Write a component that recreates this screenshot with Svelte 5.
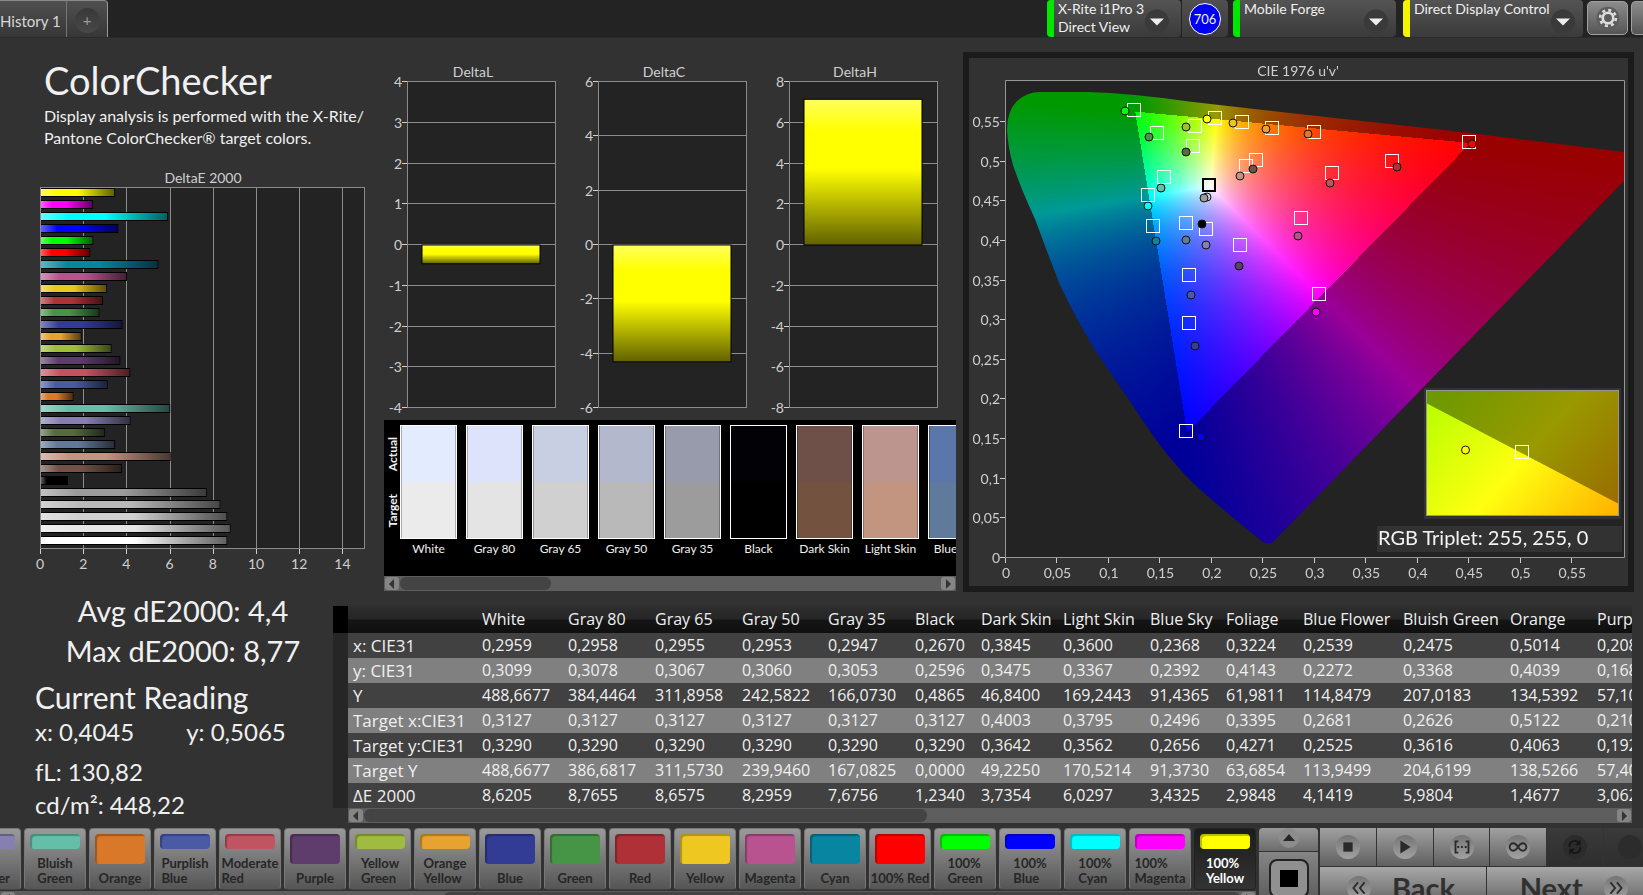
<script>
    import { onMount } from "svelte";

    const bars = [
        ["#ffff00", 3.43], ["#ff00ff", 2.4], ["#00ffff", 5.88], ["#0000ff", 3.58], ["#00ff00", 2.42],
        ["#ff0000", 2.28], ["#0885a1", 5.43], ["#b85390", 3.98], ["#ecc720", 3.06], ["#af3237", 2.87],
        ["#469446", 2.7], ["#333c95", 3.77], ["#e8a22f", 1.87], ["#9fbb40", 3.26], ["#5e3c6c", 3.67],
        ["#c25360", 4.13], ["#4a5ba6", 3.08], ["#d87a2a", 1.5], ["#64bea8", 5.98], ["#8580b1", 4.14],
        ["#576b40", 2.95], ["#627a9a", 3.43], ["#c39581", 6.0], ["#735244", 3.74], ["#000000", 1.25],
        ["#9b9b9b", 7.67], ["#b9b9b9", 8.3], ["#d0d0d0", 8.62], ["#e6e6e6", 8.77], ["#ffffff", 8.62],
    ];

    const deltas = [
        { title: "DeltaL", x: 408, max: 4, step: 1, value: -0.46 },
        { title: "DeltaC", x: 599, max: 6, step: 2, value: -4.3 },
        { title: "DeltaH", x: 790, max: 8, step: 2, value: 7.15 },
    ];

    const swatches = [
        ["White", "#e3ebff", "#ebebeb"],
        ["Gray 80", "#dde3fa", "#e4e4e4"],
        ["Gray 65", "#c9cfe3", "#d0d0d0"],
        ["Gray 50", "#b3b8cd", "#b9b9b9"],
        ["Gray 35", "#989bac", "#9c9c9c"],
        ["Black", "#020206", "#000000"],
        ["Dark Skin", "#6e5049", "#735240"],
        ["Light Skin", "#bc958f", "#c29580"],
        ["Blue Sky", "#5b76aa", "#5f7a9b"],
    ];

    const targets = [
        [1134, 110], [1157, 133], [1193, 146], [1195, 126], [1215, 118], [1242, 122], [1272, 128],
        [1256, 160], [1246, 166], [1164, 177], [1148, 195], [1153, 226], [1186, 223], [1206, 229],
        [1240, 245], [1189, 275], [1189, 323], [1314, 132], [1469, 142], [1392, 161], [1332, 173],
        [1301, 218], [1319, 294], [1186, 431],
    ];

    const readings = [
        [1125, 111, "#00ff00"], [1149, 137, "#469446"], [1186, 127, "#9fbb40"], [1207, 119, "#ffff00"],
        [1233, 123, "#ecc720"], [1266, 129, "#e8a22f"], [1186, 152, "#576b40"], [1240, 176, "#c39581"],
        [1253, 169, "#735244"], [1161, 188, "#64bea8"], [1148, 206, "#00ffff"], [1207, 197, "#d0d0d0"],
        [1204, 198, "#9b9b9b"], [1202, 224, "#000000"], [1156, 241, "#0885a1"], [1186, 240, "#627a9a"],
        [1206, 245, "#8580b1"], [1239, 266, "#5e3c6c"], [1191, 295, "#4a5ba6"], [1195, 346, "#383d96"],
        [1298, 236, "#b85390"], [1308, 134, "#d87a2a"], [1472, 144, "#ff0000"], [1397, 167, "#af3237"],
        [1330, 183, "#c25360"], [1316, 312, "#ff00ff"], [1201, 437, "#0000ff"],
    ];

    const columns = [
        ["", 129], ["White", 86], ["Gray 80", 87], ["Gray 65", 87], ["Gray 50", 86], ["Gray 35", 87],
        ["Black", 66], ["Dark Skin", 82], ["Light Skin", 87], ["Blue Sky", 76], ["Foliage", 77],
        ["Blue Flower", 100], ["Bluish Green", 107], ["Orange", 87], ["Purplish Blue", 110],
    ];

    const rows = [
        ["x: CIE31", "0,2959", "0,2958", "0,2955", "0,2953", "0,2947", "0,2670", "0,3845", "0,3600", "0,2368", "0,3224", "0,2539", "0,2475", "0,5014", "0,2080"],
        ["y: CIE31", "0,3099", "0,3078", "0,3067", "0,3060", "0,3053", "0,2596", "0,3475", "0,3367", "0,2392", "0,4143", "0,2272", "0,3368", "0,4039", "0,1680"],
        ["Y", "488,6677", "384,4464", "311,8958", "242,5822", "166,0730", "0,4865", "46,8400", "169,2443", "91,4365", "61,9811", "114,8479", "207,0183", "134,5392", "57,1000"],
        ["Target x:CIE31", "0,3127", "0,3127", "0,3127", "0,3127", "0,3127", "0,3127", "0,4003", "0,3795", "0,2496", "0,3395", "0,2681", "0,2626", "0,5122", "0,2100"],
        ["Target y:CIE31", "0,3290", "0,3290", "0,3290", "0,3290", "0,3290", "0,3290", "0,3642", "0,3562", "0,2656", "0,4271", "0,2525", "0,3616", "0,4063", "0,1920"],
        ["Target Y", "488,6677", "386,6817", "311,5730", "239,9460", "167,0825", "0,0000", "49,2250", "170,5214", "91,3730", "63,6854", "113,9499", "204,6199", "138,5266", "57,4000"],
        ["ΔE 2000", "8,6205", "8,7655", "8,6575", "8,2959", "7,6756", "1,2340", "3,7354", "6,0297", "3,4325", "2,9848", "4,1419", "5,9804", "1,4677", "3,0620"],
    ];

    const patches = [
        ["Blue\nFlower", "#8580b1"], ["Bluish\nGreen", "#64bea8"], ["Orange", "#d87828"],
        ["Purplish\nBlue", "#4a5ba6"], ["Moderate\nRed", "#c25360"], ["Purple", "#5e3c6c"],
        ["Yellow\nGreen", "#9fbb40"], ["Orange\nYellow", "#e8a22f"], ["Blue", "#333c95"],
        ["Green", "#469446"], ["Red", "#af3037"], ["Yellow", "#eec821"], ["Magenta", "#b85390"],
        ["Cyan", "#0885a1"], ["100% Red", "#ff0000"], ["100%\nGreen", "#00ff00"],
        ["100%\nBlue", "#0000ff"], ["100%\nCyan", "#00ffff"], ["100%\nMagenta", "#ff00ff"],
        ["100%\nYellow", "#ffff00"],
    ];

    const deX = (v) => 40 + v * 21.6;
    const cieX = (u) => 1006 + u * 1029.7;
    const cieY = (v) => 557 - v * 792.7;
    const comma = (v) => String(+v.toFixed(2)).replace(".", ",");

    const uTicks = Array.from({ length: 12 }, (_, i) => i * 0.05);

    function ticks(d) {
        const out = [];
        for (let v = -d.max; v <= d.max; v += d.step) out.push(v);
        return out;
    }
    const deltaY = (d, v) => 245 - (v / d.max) * 163;

    const locus = "M1263 542 Q1269 545 1274 541 L1624 181 V152 L1462 132 L1290 113 L1193 102 Q1130 93 1088 92 H1040 "
        + "Q1027 92 1017 101 Q1007 111 1007 130 Q1008 148 1013 165 Q1021 189 1035 219 Q1047 252 1060 285 "
        + "Q1076 319 1095 350 L1127 397 Q1143 422 1160 445 Q1175 465 1193 483 Q1225 512 1263 542Z";

    let canvas;

    // linear sRGB at constant luminance, scaled so the strongest channel is 1
    function colorAt(u, v) {
        const d = 6 * u - 16 * v + 12;
        const x = (9 * u) / d;
        const y = (4 * v) / d;
        const X = x / y;
        const Z = (1 - x - y) / y;
        const rgb = [
            3.2406 * X - 1.5372 - 0.4986 * Z,
            -0.9689 * X + 1.8758 + 0.0415 * Z,
            0.0557 * X - 0.204 + 1.057 * Z,
        ];
        const k = (Math.min(...rgb) >= 0 ? 255 : 153) / Math.max(...rgb);
        return rgb.map((c) => Math.max(0, c) * k);
    }

    onMount(() => {
        const ctx = canvas.getContext("2d");
        const img = ctx.createImageData(659, 528);
        for (let j = 0; j < 528; j++) {
            for (let i = 0; i < 659; i++) {
                const v = Math.max(0.001, (557 - 58 - j) / 792.7);
                const [r, g, b] = colorAt((i + 969 - 1006) / 1029.7, v);
                img.data.set([r, g, b, 255], (j * 659 + i) * 4);
            }
        }
        ctx.putImageData(img, 0, 0);
        ctx.globalCompositeOperation = "destination-in";
        ctx.translate(-969, -58);
        ctx.fill(new Path2D(locus));
    });
</script>

{#snippet scrollbar(from, to)}
    <div class="scrollbar">
        <button class="arrow" aria-label="Scroll left"><svg viewBox="0 0 14 14"><path d="M9 2v10L4 7z" /></svg></button>
        <div class="track"><div class="thumb" style="margin-left: {from}%; width: {to - from}%"></div></div>
        <button class="arrow" aria-label="Scroll right"><svg viewBox="0 0 14 14"><path d="M5 2v10l5-5z" /></svg></button>
    </div>
{/snippet}

{#snippet dropArrow()}
    <svg class="drop" viewBox="0 0 26 26">
        <circle cx="13" cy="13" r="12" fill="#3a3a3a" />
        <path d="M6 10h14l-7 7z" fill="#eee" />
    </svg>
{/snippet}

<div class="app">
    <header>
        <nav>
            <button class="tab">History 1</button>
            <button class="tab add" aria-label="Add history"><span>+</span></button>
        </nav>
        <div class="devices">
            <button class="device meter"><i class="green"></i><span>X-Rite i1Pro 3<br />Direct View</span>{@render dropArrow()}</button>
            <div class="count"><b>706</b></div>
            <button class="device source"><i class="green"></i><span>Mobile Forge</span>{@render dropArrow()}</button>
            <button class="device display"><i class="yellow"></i><span>Direct Display Control</span>{@render dropArrow()}</button>
            <button class="gear" aria-label="Settings">
                <svg viewBox="0 0 32 32">
                    <circle cx="16" cy="16" r="13" fill="#5c5c5c" />
                    <circle cx="16" cy="16" r="6" fill="none" stroke="#ddd" stroke-width="3" />
                    <circle cx="16" cy="16" r="9" fill="none" stroke="#ddd" stroke-width="3" stroke-dasharray="3.5 3.57" />
                </svg>
            </button>
            <button class="gear cut" aria-label="More"></button>
        </div>
    </header>

    <main>
        <section class="summary">
            <h1>ColorChecker</h1>
            <p>Display analysis is performed with the X-Rite/<br />Pantone ColorChecker® target colors.</p>
            <svg class="chart" viewBox="0 162 384 430">
                <defs>
                    <linearGradient id="shade-h">
                        <stop offset="0" stop-color="#fff" stop-opacity=".38" />
                        <stop offset=".22" stop-color="#fff" stop-opacity="0" />
                        <stop offset=".5" stop-color="#000" stop-opacity="0" />
                        <stop offset="1" stop-color="#000" stop-opacity=".62" />
                    </linearGradient>
                    <linearGradient id="shade-v" x2="0" y2="1">
                        <stop offset="0" stop-color="#fff" stop-opacity=".36" />
                        <stop offset=".22" stop-color="#fff" stop-opacity="0" />
                        <stop offset=".48" stop-color="#000" stop-opacity="0" />
                        <stop offset="1" stop-color="#000" stop-opacity=".62" />
                    </linearGradient>
                </defs>
                <text x="203" y="183" text-anchor="middle">DeltaE 2000</text>
                <rect class="plot" x="40.5" y="187.5" width="324" height="361" />
                {#each [0, 2, 4, 6, 8, 10, 12, 14] as v}
                    <path class="grid" d="M{Math.round(deX(v)) + 0.5} 188V548" />
                    <path class="tick" d="M{Math.round(deX(v)) + 0.5} 549v5" />
                    <text x={deX(v)} y="569" text-anchor="middle">{v}</text>
                {/each}
                {#each bars as [color, value], i}
                    <rect x="41" y={188 + i * 12} width={value * 21.6} height="9" fill="#000" />
                    <rect x="41" y={189 + i * 12} width={value * 21.6 - 1} height="7" fill={color} />
                    <rect x="41" y={189 + i * 12} width={value * 21.6 - 1} height="7" fill="url(#shade-h)" />
                {/each}
            </svg>
        </section>

        <section class="middle">
            <svg class="chart" viewBox="384 56 572 364">
                {#each deltas as d}
                    <text x={d.x + 65} y="77" text-anchor="middle">{d.title}</text>
                    <rect class="plot" x={d.x - 0.5} y="81.5" width="148" height="326" />
                    {#each ticks(d) as v}
                        <path class="grid" d="M{d.x} {Math.round(deltaY(d, v)) - 0.5}h147" />
                        <path class="tick" d="M{d.x - 6} {Math.round(deltaY(d, v)) - 0.5}h5" />
                        <text x={d.x - 6} y={deltaY(d, v) + 5} text-anchor="end">{v}</text>
                    {/each}
                    <rect x={d.x + 14} y={deltaY(d, Math.max(0, d.value))} width="118" height={(Math.abs(d.value) / d.max) * 163} fill="#ff0" />
                    <rect x={d.x + 14} y={deltaY(d, Math.max(0, d.value))} width="118" height={(Math.abs(d.value) / d.max) * 163} fill="url(#shade-v)" stroke="#000" />
                {/each}
            </svg>
            <div class="compare">
                <div class="strip">
                    <div class="sides"><span>Actual</span><span>Target</span></div>
                    {#each swatches as [name, actual, target]}
                        <figure>
                            <div class="pair">
                                <div style="background: {actual}"></div>
                                <div style="background: {target}"></div>
                            </div>
                            <figcaption>{name}</figcaption>
                        </figure>
                    {/each}
                </div>
                {@render scrollbar(0, 28)}
            </div>
        </section>

        <section class="cie">
            <canvas bind:this={canvas} width="659" height="528"></canvas>
            <svg class="chart" viewBox="969 58 659 528">
                <defs>
                    <linearGradient id="lit" gradientUnits="userSpaceOnUse" x1="1427" y1="403" x2="1585" y2="541">
                        <stop offset="0" stop-color="#b8ff00" />
                        <stop offset=".52" stop-color="#ffff10" />
                        <stop offset="1" stop-color="#ffb600" />
                    </linearGradient>
                    <linearGradient id="dim" gradientUnits="userSpaceOnUse" x1="1427" y1="403" x2="1585" y2="541">
                        <stop offset="0" stop-color="#6c9900" />
                        <stop offset=".52" stop-color="#999900" />
                        <stop offset="1" stop-color="#996c00" />
                    </linearGradient>
                </defs>
                <text x="1298" y="76" text-anchor="middle">CIE 1976 u'v'</text>
                <path class="frame" d="M1005.5 80.5h619v477h-619z" />
                {#each uTicks as t}
                    <path class="tick" d="M{Math.round(cieX(t)) - 0.5} 558v5" />
                    <text x={cieX(t)} y="578" text-anchor="middle">{comma(t)}</text>
                    <path class="tick" d="M1000 {Math.round(cieY(t)) + 0.5}h5" />
                    <text x="1000" y={cieY(t) + 6} text-anchor="end">{comma(t)}</text>
                {/each}
                {#each targets as [x, y]}
                    <rect class="target" x={x - 6.5} y={y - 6.5} width="13" height="13" />
                {/each}
                <rect x="1203" y="179" width="12" height="12" fill="none" stroke="#000" stroke-width="2" />
                {#each readings as [x, y, color]}
                    <circle cx={x} cy={y} r="4" fill={color} stroke="#111" />
                {/each}
                <rect x="1424" y="388" width="197" height="131" fill="#323232" />
                <rect x="1427" y="391" width="192" height="125" fill="url(#dim)" />
                <path d="M1427 403.500L1619 504v12h-192z" fill="url(#lit)" />
                <rect class="frame" x="1426.500" y="390.500" width="192" height="125" />
                <rect class="target" x="1515.500" y="445.500" width="13" height="13" />
                <circle cx="1465.500" cy="450" r="4" fill="#ff0" stroke="#111" />
                <rect x="1377" y="526" width="245" height="26" fill="#323232" />
                <text class="triplet" x="1378" y="545">RGB Triplet: 255, 255, 0</text>
            </svg>
        </section>
    </main>

    <div class="lower">
        <section class="stats">
            <p class="big">Avg dE2000: 4,4</p>
            <p class="big">Max dE2000: 8,77</p>
            <h2>Current Reading</h2>
            <p class="xy"><span>x: 0,4045</span><span>y: 0,5065</span></p>
            <p>fL: 130,82</p>
            <p>cd/m²: 448,22</p>
        </section>
        <section class="data">
            <div class="gutter"></div>
            <div class="grid-wrap">
                <div class="clip">
                    <table>
                        <colgroup>
                            {#each columns as [, width]}<col style="width: {width}px" />{/each}
                        </colgroup>
                        <thead>
                            <tr>{#each columns as [name]}<th scope="col">{name}</th>{/each}</tr>
                        </thead>
                        <tbody>
                            {#each rows as [label, ...cells]}
                                <tr>
                                    <th scope="row">{label}</th>
                                    {#each cells as cell}<td>{cell}</td>{/each}
                                </tr>
                            {/each}
                        </tbody>
                    </table>
                </div>
                {@render scrollbar(0, 45)}
            </div>
        </section>
    </div>

    <footer>
        <div class="patch-area">
            <div class="patches">
                {#each patches as [name, color], i}
                    <button class="patch" class:short={name.includes("\n")} class:current={i === patches.length - 1}>
                        <span class="chip" style="background: {color}"></span>
                        <span class="name">{name}</span>
                    </button>
                {/each}
            </div>
            {@render scrollbar(35, 100)}
        </div>
        <div class="expand">
            <button class="up" aria-label="Expand">
                <svg viewBox="0 0 24 20"><circle cx="12" cy="10" r="10" fill="#8c8c8c" /><path d="M6 13h12l-6-7z" fill="#262626" /></svg>
            </button>
            <button class="pattern" aria-label="Pattern"><span></span></button>
        </div>
        <div class="controls">
            <svg class="defs" aria-hidden="true">
                <linearGradient id="knob" x2="0" y2="1">
                    <stop offset="0" stop-color="#747474" />
                    <stop offset="1" stop-color="#a2a2a2" />
                </linearGradient>
            </svg>
            <div class="transport">
                <button aria-label="Stop"><svg viewBox="0 0 28 28"><circle cx="14" cy="14" r="13" /><path d="M9 9h10v10H9z" /></svg></button>
                <button aria-label="Play"><svg viewBox="0 0 28 28"><circle cx="14" cy="14" r="13" /><path d="M9 7v14l11-7z" /></svg></button>
                <button aria-label="Range"><svg viewBox="0 0 28 28"><circle cx="14" cy="14" r="13" /><path class="line" d="M10 8H7v12h3M18 8h3v12h-3M9 14h2M13 14h2M17 14h2" /></svg></button>
                <button aria-label="Continuous"><svg viewBox="0 0 28 28"><circle cx="14" cy="14" r="13" /><path class="line" d="M14 14c-2-3-3-4-5-4a4 4 0 0 0 0 8c2 0 3-1 5-4s3-4 5-4a4 4 0 0 1 0 8c-2 0-3-1-5-4z" /></svg></button>
                <button class="dark" aria-label="Refresh"><svg viewBox="0 0 28 28"><circle cx="14" cy="14" r="13" /><path class="line" d="M8 14a6 6 0 0 1 10-5M20 14a6 6 0 0 1-10 5" /><path d="M20 6v6h-6zM8 22v-6h6z" /></svg></button>
                <button class="dark cut" aria-label="Record"><svg viewBox="0 0 28 28"><circle cx="14" cy="14" r="13" /></svg></button>
            </div>
            <div class="pager">
                <button><svg viewBox="0 0 28 28"><circle cx="14" cy="14" r="13" /><path class="line" d="M13 8l-5 6 5 6M20 8l-5 6 5 6" /></svg>Back</button>
                <button class="next">Next<svg viewBox="0 0 28 28"><circle cx="14" cy="14" r="13" /><path class="line" d="M8 8l5 6-5 6M15 8l5 6-5 6" /></svg></button>
            </div>
        </div>
    </footer>
</div>

<style>
:global(body) {
    background: #323232;
}

.app {
    display: flex;
    flex-direction: column;
    height: 100vh;
    overflow: hidden;
    background: #323232;
    color: #f0f0f0;
    font-family: Lato, "Open Sans", sans-serif;
    font-size: 16px;
}

button {
    margin: 0;
    padding: 0;
    border: 0;
    color: inherit;
    font: inherit;
}

h1, h2, p, figure {
    margin: 0;
    font-weight: 400;
}

header {
    display: flex;
    justify-content: space-between;
    flex: none;
    height: 38px;
    background: #232323;
    border-bottom: 1px solid #2b2b2b;
    box-sizing: border-box;
}

nav, .devices {
    display: flex;
}

.tab {
    width: 67px;
    height: 37px;
    padding-top: 3px;
    text-align: left;
    font-size: 15px;
    color: #d8d8d8;
    white-space: nowrap;
    background: linear-gradient(#505050, #363636);
    border-top: 1px solid #8a8a8a;
    border-right: 1px solid #777;
}

.tab.add {
    width: 41px;
    text-align: center;
    border-right: 1px solid #999;
    border-radius: 0 4px 0 0;
}

.tab.add span {
    display: inline-block;
    width: 25px;
    line-height: 25px;
    border-radius: 50%;
    color: #999;
    background: linear-gradient(#383838, #484848);
}

.device {
    display: flex;
    height: 37px;
    margin-right: 7px;
    text-align: left;
    font-size: 14px;
    line-height: 18px;
    background: linear-gradient(#545454, #3a3a3a);
    border-radius: 4px;
}

.device i {
    width: 7px;
    margin-right: 4px;
    border-radius: 4px 0 0 4px;
}

.device span {
    flex: 1;
    white-space: nowrap;
}

.green {
    background: #00e800;
}

.yellow {
    background: #f4f400;
}

.drop {
    width: 26px;
    margin: 6px 7px 0 0;
}

.device.meter {
    width: 134px;
    margin-right: 0;
}

.meter .drop {
    margin-right: 11px;
}

.device.source {
    width: 163px;
}

.device.display {
    width: 180px;
    margin-right: 4px;
}

.count {
    display: flex;
    align-items: center;
    justify-content: center;
    width: 46px;
    margin: 0 5px 0 1px;
    background: linear-gradient(#505050, #3a3a3a);
    border-radius: 0 4px 4px 0;
}

.count b {
    width: 30px;
    line-height: 30px;
    text-align: center;
    font-size: 13px;
    font-weight: 400;
    background: #0000f4;
    border: 1px solid #fff;
    border-radius: 50%;
}

.gear {
    display: flex;
    align-items: center;
    justify-content: center;
    width: 41px;
    height: 34px;
    margin: 1px 3px 0 0;
    background: linear-gradient(#8c8c8c, #555);
    border: 1px solid #a0a0a0;
    border-radius: 5px;
}

.gear svg {
    width: 28px;
}

.gear.cut {
    width: 12px;
    margin-right: 0;
    border-right: 0;
    border-radius: 5px 0 0 5px;
}

main {
    display: grid;
    grid-template-columns: minmax(0, 384fr) minmax(0, 572fr) minmax(0, 678fr);
    flex: none;
    align-items: start;
    padding-right: 9px;
}

.chart {
    display: block;
    width: 100%;
    font-size: 14px;
}

.chart text {
    fill: #cfcfcf;
}

.plot {
    fill: #232323;
    stroke: #8c8c8c;
}

.frame {
    fill: none;
    stroke: #969696;
}

.grid {
    stroke: #8c8c8c;
}

.tick {
    stroke: #cfcfcf;
}

.target {
    fill: none;
    stroke: #fff;
}

.chart .triplet {
    fill: #f4f4f4;
    font-size: 20px;
}

.summary h1 {
    padding: 17px 0 0 44px;
    font-size: 38px;
    line-height: 50px;
}

.summary p {
    padding: 0 0 13px 44px;
    line-height: 22px;
    white-space: nowrap;
}

.middle {
    padding-top: 18px;
}

.compare {
    background: #000;
    overflow: hidden;
}

.strip {
    display: flex;
    height: 150px;
    padding-top: 5px;
    padding-bottom: 1px;
    overflow: hidden;
}

.sides {
    display: flex;
    flex: none;
    flex-direction: column;
    justify-content: space-around;
    align-items: center;
    width: 16px;
    height: 114px;
    font-size: 12px;
    font-weight: 700;
}

.sides span {
    writing-mode: vertical-rl;
    transform: rotate(180deg);
}

.strip figure {
    flex: none;
    width: 57px;
    margin-right: 9px;
}

.pair {
    height: 112px;
    border: 1px solid #fff;
}

.pair div {
    height: 56px;
    box-shadow: inset 1px 0 #0004, inset -1px 0 #0004;
}

.strip figcaption {
    margin: 0 -6px;
    font-size: 12px;
    line-height: 20px;
    text-align: center;
    white-space: nowrap;
}

.scrollbar {
    display: flex;
    height: 15px;
    background: #5e5e5e;
}

.arrow {
    flex: none;
    width: 14px;
    margin: 1px;
    background: #858585;
    border-radius: 3px;
}

.arrow svg {
    display: block;
    fill: #333;
}

.track {
    flex: 1;
}

.thumb {
    height: 13px;
    margin-top: 1px;
    background: #444;
    border-radius: 6px;
}

.cie {
    position: relative;
    margin: 14px 0 0 7px;
    border: 6px solid #1b1b1b;
    background: linear-gradient(#232323, #232323) 37px 23px / calc(100% - 40px) calc(100% - 52px) no-repeat;
}

.cie canvas {
    display: block;
    width: 100%;
}

.cie .chart {
    position: absolute;
    inset: 0;
}

.lower {
    display: flex;
    flex: none;
    height: 222px;
    margin-top: 9px;
    padding-right: 11px;
}

.stats {
    flex: none;
    width: 333px;
    margin-top: -10px;
    font-size: 24px;
    white-space: nowrap;
}

.stats p {
    padding-left: 35px;
    line-height: 33px;
}

.stats .big {
    padding: 0 0 0 33px;
    text-align: center;
    font-size: 29px;
    line-height: 40px;
}

.stats h2 {
    padding: 6px 0 0 35px;
    font-size: 30px;
    line-height: 40px;
}

.stats .xy {
    display: flex;
    gap: 52px;
    margin-top: -2px;
    padding-bottom: 7px;
}

.data {
    display: flex;
    flex: 1;
    min-width: 0;
    padding-top: 5px;
}

.gutter {
    width: 15px;
    margin-bottom: 15px;
    background: linear-gradient(#000 27px, #262626 27px);
}

.grid-wrap {
    flex: 1;
    min-width: 0;
}

.clip {
    overflow: hidden;
}

table {
    width: 1354px;
    table-layout: fixed;
    border-collapse: collapse;
    font-family: "Open Sans", sans-serif;
    font-size: 16px;
}

th, td {
    height: 25px;
    padding: 0 0 0 5px;
    line-height: 25px;
    text-align: left;
    font-weight: 400;
    white-space: nowrap;
}

thead th {
    height: 27px;
}

tbody th {
    font-size: 17px;
}

thead tr {
    background: linear-gradient(#2e2e2e, #262626 48%, #151515 52%, #0f0f0f);
}

tbody tr {
    background: #414141;
}

tbody tr:nth-child(even) {
    background: #808080;
}

footer {
    display: flex;
    flex: none;
    height: 80px;
    margin-top: 5px;
}

.patch-area {
    flex: 1256;
    min-width: 0;
}

.patches {
    display: flex;
    justify-content: flex-end;
    gap: 3px;
    height: 62px;
    overflow: hidden;
    padding-bottom: 1px;
}

.patch {
    display: flex;
    flex: none;
    flex-direction: column;
    justify-content: space-between;
    align-items: center;
    width: 62px;
    height: 62px;
    padding: 5px 0 3px;
    box-sizing: border-box;
    font-size: 13px;
    font-weight: 700;
    line-height: 15px;
    color: #262626;
    background: linear-gradient(#9a9a9a, #555);
    border: 1px solid #777;
    border-bottom-color: #444;
    border-radius: 4px;
}

.chip {
    width: 50px;
    height: 30px;
    border-radius: 4px;
    box-shadow: inset 2px 2px 1px #0004;
}

.short .chip {
    height: 15px;
}

.name {
    text-align: left;
    white-space: pre;
}

.patch.current {
    color: #fff;
    background: linear-gradient(#1c1c1c, #333);
    border-color: #222;
}

.expand {
    display: flex;
    flex-direction: column;
    flex: none;
    gap: 1px;
    width: 59px;
    margin: 0 2px 0 3px;
    background: #333;
}

.up {
    height: 23px;
    background: linear-gradient(#999, #6c6c6c);
    border-radius: 4px 4px 0 0;
}

.up svg {
    width: 24px;
}

.pattern {
    display: flex;
    justify-content: center;
    flex: 1;
    padding-top: 9px;
    background: linear-gradient(#858585, #555);
}

.pattern span {
    width: 18px;
    height: 17px;
    border: 9px solid #909090;
    outline: 2px solid #222;
    border-radius: 6px;
    background: #000;
}

.controls {
    flex: 323;
    min-width: 0;
    overflow: hidden;
}

.transport {
    display: flex;
    gap: 1px;
    height: 38px;
    background: #333;
}

.transport button {
    flex: 56;
    background: linear-gradient(#a0a0a0, #606060);
}

.transport button.dark {
    background: linear-gradient(#3a3a3a, #2e2e2e);
}

.transport button.cut {
    flex: 39;
    text-align: right;
    overflow: hidden;
}

.controls svg {
    width: 26px;
    vertical-align: middle;
    fill: #2a2a2a;
}

.controls .defs {
    position: absolute;
    width: 0;
    height: 0;
}

.controls circle {
    fill: url(#knob);
}

.controls .dark circle {
    fill: #2c2c2c;
}

.controls .dark svg {
    fill: #151515;
}

.controls .line {
    fill: none;
    stroke: #2a2a2a;
    stroke-width: 2;
}

.controls .dark .line {
    stroke: #151515;
}

.pager {
    display: flex;
    gap: 1px;
    height: 41px;
    margin-top: 1px;
    background: #333;
}

.pager button {
    display: flex;
    align-items: center;
    gap: 20px;
    flex: 171 0 0;
    min-width: 0;
    box-sizing: border-box;
    padding-left: 26px;
    font-size: 29px;
    font-weight: 700;
    line-height: 38px;
    color: #303030;
    background: linear-gradient(#a8a8a8, #5c5c5c);
}

.pager .next {
    flex: 151 0 0;
    padding-left: 33px;
}

.pager svg {
    flex: none;
}
</style>
